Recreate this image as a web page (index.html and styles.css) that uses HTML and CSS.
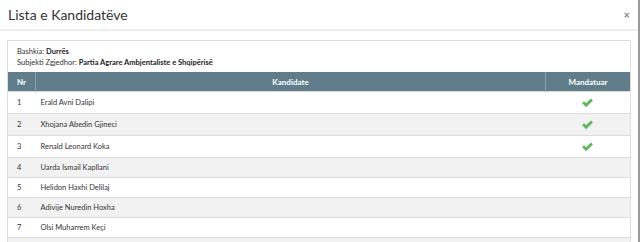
FILE: index.html
```html
<!DOCTYPE html>
<html lang="sq">
<head>
  <meta charset="UTF-8" />
  <title>Lista e Kandidatëve</title>
  <link rel="stylesheet" href="styles.css">
</head>
<body>

  <div class="modal">
    <div class="modal-header">
      <h4 class="modal-title">Lista e Kandidatëve</h4>
      <span class="close">&times;</span>
    </div>

    <div class="modal-body">
      <div class="panel">
        <div class="panel-info">
          <div>Bashkia: <b>Durrës</b></div>
          <div>Subjekti Zgjedhor: <b>Partia Agrare Ambjentaliste e Shqipërisë</b></div>
        </div>

        <table class="list">
          <thead>
            <tr>
              <th class="col-nr">Nr</th>
              <th>Kandidate</th>
              <th class="col-mand">Mandatuar</th>
            </tr>
          </thead>
          <tbody>
            <tr>
              <td>1</td><td>Erald Avni Dalipi</td>
              <td class="col-mand"><svg class="ok" viewBox="0 0 14 11"><path d="M1 5.6 L3.2 3.6 L5.4 5.8 L10.8 0.6 L13 2.7 L5.4 10.2 Z"/></svg></td>
            </tr>
            <tr>
              <td>2</td><td>Xhojana Abedin Gjineci</td>
              <td class="col-mand"><svg class="ok" viewBox="0 0 14 11"><path d="M1 5.6 L3.2 3.6 L5.4 5.8 L10.8 0.6 L13 2.7 L5.4 10.2 Z"/></svg></td>
            </tr>
            <tr>
              <td>3</td><td>Renald Leonard Koka</td>
              <td class="col-mand"><svg class="ok" viewBox="0 0 14 11"><path d="M1 5.6 L3.2 3.6 L5.4 5.8 L10.8 0.6 L13 2.7 L5.4 10.2 Z"/></svg></td>
            </tr>
            <tr><td>4</td><td>Uarda Ismail Kapllani</td><td></td></tr>
            <tr><td>5</td><td>Helidon Haxhi Delilaj</td><td></td></tr>
            <tr><td>6</td><td>Adivije Nuredin Hoxha</td><td></td></tr>
            <tr><td>7</td><td>Olsi Muharrem Keçi</td><td></td></tr>
            <tr><td></td><td></td><td></td></tr>
          </tbody>
        </table>
      </div>
    </div>
  </div>

</body>
</html>
```

FILE: styles.css
```css
html, body {
  margin: 0;
  padding: 0;
  height: 100%;
  overflow: hidden;
  background: #9a9a9a;
  font-family: "Lato", "Open Sans", sans-serif;
  color: #333;
}

.modal {
  width: 638px;
  height: 100%;
  background: #fff;
}

.modal-header {
  display: flex;
  align-items: center;
  justify-content: space-between;
  height: 29px;
  padding: 0 8px 0 8px;
  border-bottom: 2px solid #eeeeee;
}

.modal-title {
  margin: 0;
  font-size: 14px;
  font-weight: normal;
  color: #333;
}

.close {
  font-size: 11px;
  font-weight: bold;
  color: #888;
  line-height: 1;
}

.modal-body {
  padding: 9px 7px 0 7px;
}

.panel {
  border: 1px solid #dddddd;
  border-bottom: none;
}

.panel-info {
  padding: 5px 9px 4px;
  font-size: 7.5px;
  line-height: 11px;
  color: #333;
}

.panel-info b {
  font-weight: bold;
  color: #222;
}

.list {
  width: 100%;
  border-collapse: collapse;
  font-size: 7.5px;
}

.list th {
  height: 19px;
  padding: 0;
  background: #607d8b;
  color: #fff;
  font-size: 8px;
  font-weight: bold;
  text-align: center;
  border-left: 1px solid #8ea3ad;
}

.list th:first-child {
  border-left: none;
}

.col-nr {
  width: 27px;
}

.col-mand {
  width: 84px;
  text-align: center;
}

.list td {
  height: 19px;
  padding: 0 0 0 9px;
  border-top: 1px solid #dddddd;
  color: #333;
}

.list td:nth-child(2) {
  padding-left: 5px;
}

.list td.col-mand {
  height: 21px;
  padding: 0;
}

.list tbody tr:nth-child(even) td {
  background: #f2f2f2;
}

.ok {
  display: block;
  width: 13px;
  height: 10px;
  margin: 0 auto;
  fill: #5cb85c;
}
```
